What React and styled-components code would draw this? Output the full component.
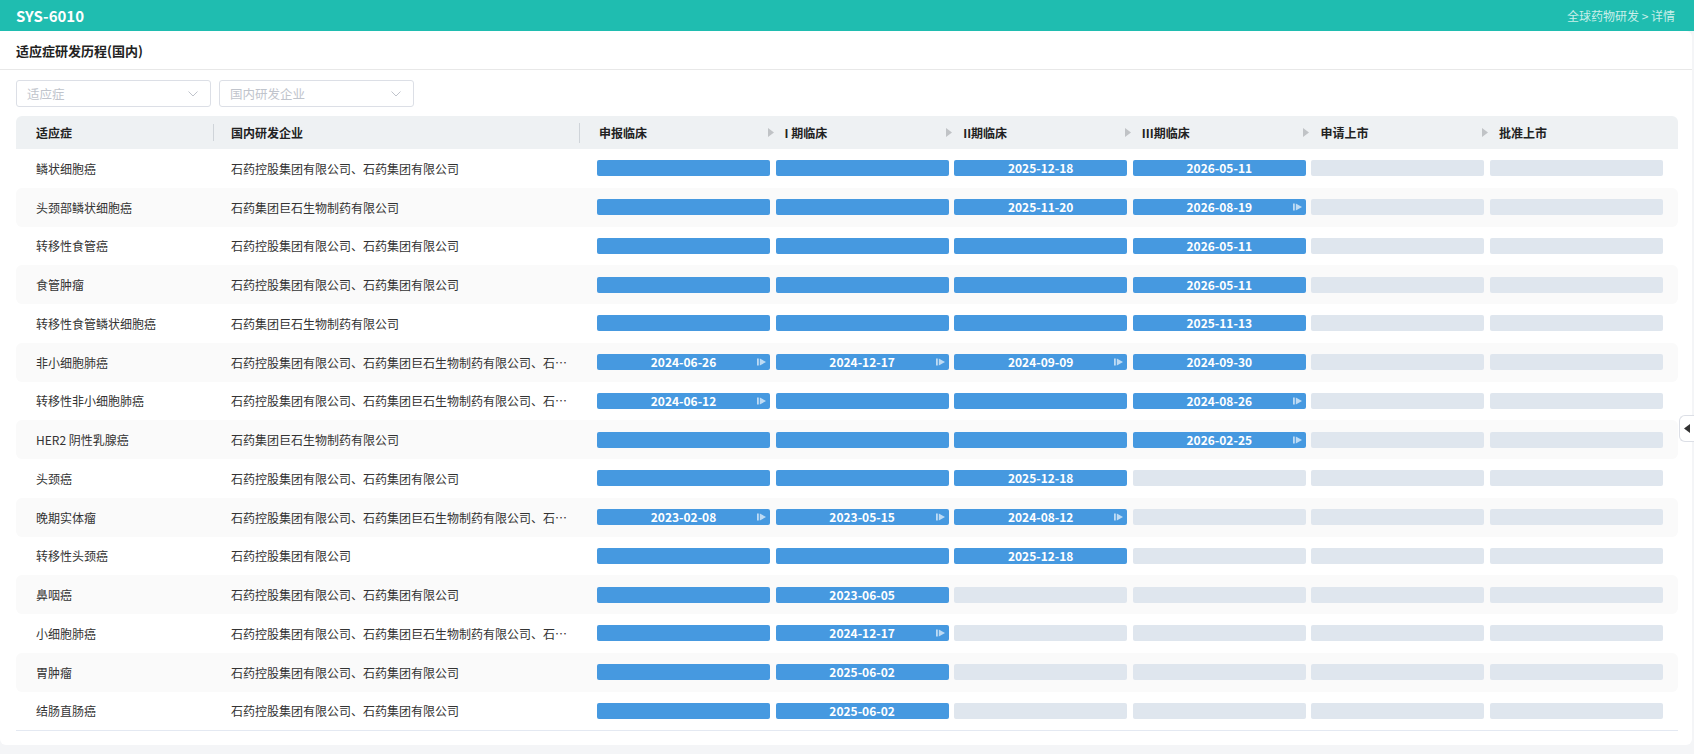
import React from 'react'
import styled, { createGlobalStyle } from 'styled-components'

const GlobalStyle = createGlobalStyle`
  body {
    margin: 0;
    background: #f4f5f7;
    font-family: "Noto Sans CJK SC", "Noto Sans", sans-serif;
  }
`

const TopBar = styled.div`
  height: 31px;
  background: #1fbdb0;
  display: flex;
  align-items: center;
  justify-content: space-between;
  padding: 0 19px 0 16px;
`
const AppTitle = styled.div`
  color: #fff;
  font-size: 15px;
  font-weight: 700;
`
const Crumb = styled.div`
  color: #c9efea;
  font-size: 12px;
`

const Card = styled.div`
  background: #fff;
  margin-right: 2px;
  height: 714px;
  border-radius: 0 6px 6px 6px;
  position: relative;
`
const CardTitle = styled.div`
  height: 38px;
  display: flex;
  align-items: center;
  padding-left: 16px;
  font-size: 13px;
  font-weight: 700;
  color: #222;
  border-bottom: 1px solid #e8e8e8;
`

const Filters = styled.div`
  display: flex;
  gap: 8px;
  padding: 10px 16px 0;
`
const Select = styled.div`
  width: 195px;
  height: 27px;
  border: 1px solid #dcdfe6;
  border-radius: 3px;
  display: flex;
  align-items: center;
  justify-content: space-between;
  padding: 0 12px 0 10px;
  box-sizing: border-box;
  color: #c0c4cc;
  font-size: 12.5px;
`

const Table = styled.div`
  margin: 9px 14px 0 16px;
  border-bottom: 1px solid #e4e9f2;
`
const Row = styled.div`
  display: grid;
  grid-template-columns: 197px 366px 1fr;
  align-items: center;
  height: ${p => (p.$head ? '33px' : '38.75px')};
  background: ${p => (p.$head ? '#eef1f3' : p.$alt ? '#fafafa' : 'transparent')};
  border-radius: ${p => (p.$head ? '6px 6px 0 0' : '6px')};
  font-size: 12px;
  font-weight: ${p => (p.$head ? 700 : 400)};
  color: ${p => (p.$head ? '#222' : '#333')};
`
const Cell = styled.div`
  position: relative;
  padding: 0 5px 0 ${p => p.$pl || 18}px;
  white-space: nowrap;
  overflow: hidden;
  text-overflow: ellipsis;
  ${p =>
    p.$sep &&
    `&::before {
      content: '';
      position: absolute;
      left: 0;
      top: 50%;
      height: 20px;
      margin-top: -10px;
      border-left: 1px solid #cfd4d9;
    }`}
`
const PhaseHeadCell = styled(Cell)`
  overflow: visible;
  height: 100%;
  padding: 0;
`
const Phases = styled.div`
  display: grid;
  grid-template-columns: repeat(6, 1fr);
  column-gap: 5.6px;
  padding: 0 15px 0 18px;
  height: 100%;
  align-items: center;
`
const PhaseHead = styled.div`
  display: flex;
  align-items: center;
  gap: 11px;
  padding-left: ${p => (p.$first ? '2px' : '0')};
  margin-left: ${p => (p.$first ? '0' : '-8px')};
  white-space: nowrap;
`
const Bar = styled.div`
  position: relative;
  height: 16px;
  border-radius: 2px;
  background: ${p => (p.$on ? '#4699e0' : '#dfe6ee')};
  color: #fff;
  font-size: 12px;
  font-weight: 600;
  line-height: 16px;
  text-align: center;
`
const Marker = styled.svg`
  position: absolute;
  right: 4px;
  top: 4px;
`
const SideTab = styled.div`
  position: absolute;
  right: -2px;
  top: 384px;
  width: 15px;
  height: 27px;
  background: #fff;
  border: 1px solid #dcdfe6;
  border-right: none;
  border-radius: 6px 0 0 6px;
  display: flex;
  align-items: center;
  justify-content: center;
  box-sizing: border-box;
`

const Chevron = () => (
  <svg width="10" height="6" viewBox="0 0 10 6">
    <polyline points="0.5,0.5 5,5 9.5,0.5" fill="none" stroke="#c0c4cc" strokeWidth="1" />
  </svg>
)
const HeadArrow = () => (
  <svg width="6" height="9" viewBox="0 0 6 9">
    <polygon points="0,0 6,4.5 0,9" fill="#c0c3c6" />
  </svg>
)
const StepIcon = () => (
  <Marker width="9" height="8" viewBox="0 0 9 8">
    <rect x="0" y="0.5" width="1.8" height="7" fill="rgba(255,255,255,0.65)" />
    <polygon points="2.8,0.5 9,4 2.8,7.5" fill="rgba(255,255,255,0.65)" />
  </Marker>
)

const A = '石药控股集团有限公司、石药集团有限公司'
const B = '石药集团巨石生物制药有限公司'
const C = '石药控股集团有限公司、石药集团巨石生物制药有限公司、石药集团有限公司'

// each phase: 1 = filled, 0 = empty, string = date, '>' suffix = step icon
const rows = [
  ['鳞状细胞癌', A, [1, 1, '2025-12-18', '2026-05-11', 0, 0]],
  ['头颈部鳞状细胞癌', B, [1, 1, '2025-11-20', '2026-08-19>', 0, 0]],
  ['转移性食管癌', A, [1, 1, 1, '2026-05-11', 0, 0]],
  ['食管肿瘤', A, [1, 1, 1, '2026-05-11', 0, 0]],
  ['转移性食管鳞状细胞癌', B, [1, 1, 1, '2025-11-13', 0, 0]],
  ['非小细胞肺癌', C, ['2024-06-26>', '2024-12-17>', '2024-09-09>', '2024-09-30', 0, 0]],
  ['转移性非小细胞肺癌', C, ['2024-06-12>', 1, 1, '2024-08-26>', 0, 0]],
  ['HER2 阴性乳腺癌', B, [1, 1, 1, '2026-02-25>', 0, 0]],
  ['头颈癌', A, [1, 1, '2025-12-18', 0, 0, 0]],
  ['晚期实体瘤', C, ['2023-02-08>', '2023-05-15>', '2024-08-12>', 0, 0, 0]],
  ['转移性头颈癌', '石药控股集团有限公司', [1, 1, '2025-12-18', 0, 0, 0]],
  ['鼻咽癌', A, [1, '2023-06-05', 0, 0, 0, 0]],
  ['小细胞肺癌', C, [1, '2024-12-17>', 0, 0, 0, 0]],
  ['胃肿瘤', A, [1, '2025-06-02', 0, 0, 0, 0]],
  ['结肠直肠癌', A, [1, '2025-06-02', 0, 0, 0, 0]],
]

const phases = ['申报临床', 'I 期临床', 'II期临床', 'III期临床', '申请上市', '批准上市']

const PhaseBar = ({ v }) => {
  if (!v) return <Bar />
  if (v === 1) return <Bar $on />
  const step = v.endsWith('>')
  return (
    <Bar $on>
      {step ? v.slice(0, -1) : v}
      {step && <StepIcon />}
    </Bar>
  )
}

const App = () => {
  return (
    <>
      <GlobalStyle />
      <TopBar>
        <AppTitle>SYS-6010</AppTitle>
        <Crumb>全球药物研发 &gt; 详情</Crumb>
      </TopBar>
      <Card>
        <CardTitle>适应症研发历程(国内)</CardTitle>
        <Filters>
          <Select>
            适应症
            <Chevron />
          </Select>
          <Select>
            国内研发企业
            <Chevron />
          </Select>
        </Filters>
        <Table>
          <Row $head>
            <Cell $pl={20}>适应症</Cell>
            <Cell $sep>国内研发企业</Cell>
            <PhaseHeadCell $sep>
              <Phases>
                {phases.map((p, i) => (
                  <PhaseHead key={p} $first={i === 0}>
                    {i > 0 && <HeadArrow />}
                    {p}
                  </PhaseHead>
                ))}
              </Phases>
            </PhaseHeadCell>
          </Row>
          {rows.map(([name, org, ph], i) => (
            <Row key={name} $alt={i % 2 === 1}>
              <Cell $pl={20}>{name}</Cell>
              <Cell>{org}</Cell>
              <Phases>
                {ph.map((v, j) => (
                  <PhaseBar key={j} v={v} />
                ))}
              </Phases>
            </Row>
          ))}
        </Table>
        <SideTab>
          <svg width="6" height="9" viewBox="0 0 6 9">
            <polygon points="6,0 0,4.5 6,9" fill="#333" />
          </svg>
        </SideTab>
      </Card>
    </>
  )
}

export default App
